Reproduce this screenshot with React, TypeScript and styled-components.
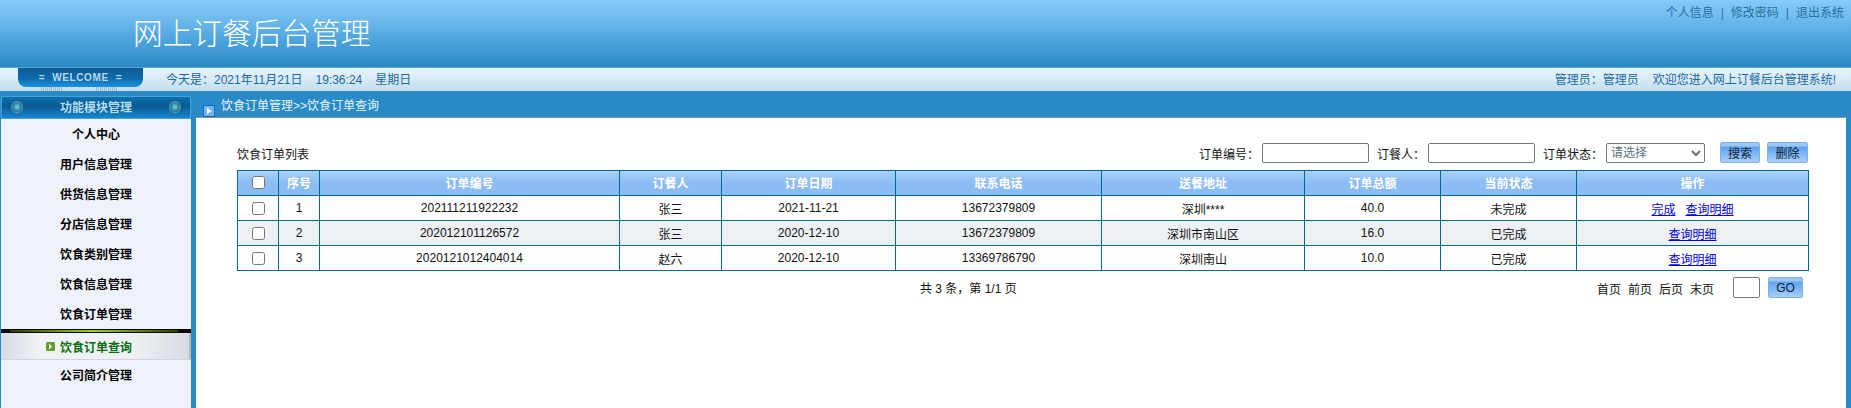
import styled, { createGlobalStyle } from "styled-components";

const FONT = `"Liberation Sans", "Noto Sans CJK SC", sans-serif`;

const GlobalStyle = createGlobalStyle`
  html, body {
    margin: 0;
    padding: 0;
    height: 100%;
    overflow: hidden;
    background-color: #288ac6;
  }
  #root {
    height: 100%;
  }
  * {
    box-sizing: border-box;
  }
`;

const Root = styled.div`
  height: 408px;
  display: flex;
  flex-direction: column;
  font-family: ${FONT};
  font-size: 12px;
  color: #111;
`;

const Banner = styled.header`
  height: 67px;
  flex: none;
  display: flex;
  justify-content: space-between;
  padding: 0 7px 0 133px;
  background: linear-gradient(#85cbfb 0%, #6db9ec 30%, #449dd7 70%, #288ac6 100%);
`;

const Title = styled.h1`
  margin: 16px 0 0;
  font-size: 29.7px;
  line-height: 36px;
  font-weight: 300;
  color: #fff;
`;

const TopLinks = styled.div`
  display: flex;
  gap: 7px;
  margin-top: 5px;
  height: 16px;
  line-height: 16px;
  color: #27709f;
`;

const StatusStrip = styled.div`
  height: 24px;
  flex: none;
  display: flex;
  align-items: flex-start;
  padding: 0 15px 0 18px;
  border-top: 1px solid #5f9fc9;
  background: linear-gradient(#e9f5fd, #c3def1);
  color: #1d6b9f;
  line-height: 24px;
`;

const WelcomeWrap = styled.div`
  width: 125px;
  flex: none;
  margin-right: 23px;
`;

const WelcomeBadge = styled.div`
  height: 19px;
  display: flex;
  justify-content: center;
  gap: 7px;
  border-radius: 0 0 8px 8px;
  background: linear-gradient(#0b5c96 0%, #0f6bab 55%, #1a94e4 100%);
  color: #b9d7ea;
  font-size: 10px;
  font-weight: bold;
  letter-spacing: 0.6px;
  line-height: 20px;
`;

const WelcomeTicks = styled.div`
  height: 4px;
  display: flex;
  justify-content: space-between;
  padding: 0 25px 0 23px;
`;

const Tick = styled.span`
  width: 22px;
  background: repeating-linear-gradient(90deg, #9fb8c9 0 1px, transparent 1px 2px);
`;

const Today = styled.div`
  display: flex;
  gap: 13px;
`;

const Welcome = styled.div`
  margin-left: auto;
  display: flex;
  gap: 14px;
`;

const Main = styled.div`
  flex: 1;
  min-height: 0;
  display: flex;
  padding: 0 5px 0 1px;
`;

const Sidebar = styled.aside`
  width: 190px;
  flex: none;
  margin: 5px 5px 0 0;
  display: flex;
  flex-direction: column;
  background-color: #edf2fb;
`;

const SideHead = styled.div`
  height: 23px;
  flex: none;
  display: flex;
  align-items: center;
  justify-content: space-between;
  padding: 0 9px 2px;
  border: 1px solid #4ba0d8;
  background: linear-gradient(#0c70b0 0%, #0a5a92 45%, #0f6fae 70%, #1787cf 100%);
  color: #b7dcf2;
  font-weight: bold;
`;

const Knob = styled.span`
  width: 12px;
  height: 12px;
  border-radius: 50%;
  border: 1px solid #6f97ad;
  background: radial-gradient(circle, #6fd4e6 0%, #2e86a5 55%, #123f5d 100%);
`;

const SideItem = styled.div`
  height: 30px;
  flex: none;
  display: flex;
  align-items: center;
  justify-content: center;
  padding-bottom: 2px;
  font-weight: bold;
  color: #000;
`;

const ActiveBar = styled.div`
  height: 4px;
  flex: none;
  padding: 1px 13px 1px 9px;
  background: #0a0a0a;
`;

const ActiveGlow = styled.div`
  height: 100%;
  background: linear-gradient(90deg, #2c3d00, #a8d800 50%, #2c3d00);
`;

const ActiveItem = styled.div`
  height: 27px;
  flex: none;
  display: flex;
  align-items: center;
  justify-content: center;
  gap: 5px;
  padding: 0 12px 0 0;
  border-bottom: 1px solid #cfd4e0;
  border-right: 2px solid #b5b9bf;
  background: linear-gradient(90deg, #d5d9e2, #f0f2f6 20%, #eef0f4 70%, #d8dbe2),
    #e6e8ee;
  font-weight: bold;
  color: #0a6d10;
`;

const Content = styled.main`
  flex: 1;
  min-width: 0;
  display: flex;
  flex-direction: column;
`;

const Crumb = styled.div`
  height: 27px;
  flex: none;
  display: flex;
  align-items: flex-start;
  gap: 6px;
  padding: 7px 0 0 7px;
  border-bottom: 1px solid #8a8f94;
  color: #e8f4fc;
  line-height: 16px;
`;

const CrumbIcon = styled.svg`
  width: 12px;
  height: 12px;
  margin-top: 7px;
  flex: none;
`;

const Panel = styled.section`
  flex: 1;
  background-color: #fff;
  padding: 24px 38px 0 41px;
`;

const Toolbar = styled.div`
  height: 28px;
  display: flex;
  align-items: flex-start;
`;

const ListTitle = styled.div`
  margin: 5px auto 0 0;
  line-height: 16px;
`;

const Field = styled.label`
  display: flex;
  align-items: flex-start;
  gap: 3px;
  margin-left: 8px;
  line-height: 16px;
  padding-top: 1px;
`;

const FieldText = styled.span`
  margin-top: 4px;
`;

const TextInput = styled.input<{ $width: number }>`
  width: ${(p) => p.$width}px;
  height: 20px;
  margin: 0;
  padding: 0 4px;
  border: 1px solid #767676;
  border-radius: 2px;
  background: #fff;
`;

const Select = styled.select`
  width: 99px;
  height: 20px;
  margin: 0;
  padding: 0;
  border: 1px solid #767676;
  border-radius: 2px;
  background-color: #fff;
  color: #5a7187;
  font-family: ${FONT};
  font-size: 12px;
`;

const BlueButton = styled.button<{ $width: number }>`
  width: ${(p) => p.$width}px;
  height: 21px;
  margin: 0;
  padding: 0;
  border: 1px solid #7fb0e6;
  border-radius: 2px;
  background: linear-gradient(#9cc7f7 0 3px, #5fa2ee 4px, #a9cff8 100%);
  color: #0c2238;
  font-family: ${FONT};
  font-size: 12px;
`;

const SearchButton = styled(BlueButton)`
  margin-left: 15px;
`;

const DeleteButton = styled(BlueButton)`
  margin-left: 7px;
`;

const Table = styled.table`
  width: 1571px;
  border-collapse: collapse;
  table-layout: fixed;
  text-align: center;
`;

const HeadRow = styled.tr`
  background: linear-gradient(#acd3f9 0%, #8bbcf3 45%, #8bbcf3 100%);
`;

const Th = styled.th`
  height: 25px;
  padding: 0 0 2px;
  border: 1px solid #006a8c;
  color: #fff;
  font-size: 12px;
  font-weight: bold;
`;

const Row = styled.tr<{ $alt: boolean }>`
  background-color: ${(p) => (p.$alt ? "#edf0f5" : "#fff")};
`;

const Td = styled.td`
  height: 25px;
  padding: 0;
  border: 1px solid #006a8c;
  color: #111;
`;

const Check = styled.input`
  display: block;
  width: 13px;
  height: 13px;
  margin: 0 auto;
`;

const OpLink = styled.a`
  color: #0000ee;
  text-decoration: underline;
  cursor: pointer;
`;

const OpGroup = styled.div`
  display: flex;
  justify-content: center;
  gap: 10px;
`;

const Pager = styled.div`
  display: flex;
  align-items: flex-start;
  padding: 6px 5px 0 683px;
`;

const Summary = styled.div`
  margin: 4px auto 0 0;
  line-height: 16px;
`;

const PageLinks = styled.div`
  display: flex;
  gap: 7px;
  margin: 5px 19px 0 0;
  line-height: 16px;
`;

const PageInput = styled(TextInput)`
  height: 21px;
`;

const GoButton = styled(BlueButton)`
  margin-left: 8px;
`;

const menu = ["个人中心", "用户信息管理", "供货信息管理", "分店信息管理", "饮食类别管理", "饮食信息管理", "饮食订单管理"];

const columns = [
  { width: 41, label: "" },
  { width: 41, label: "序号" },
  { width: 300, label: "订单编号" },
  { width: 102, label: "订餐人" },
  { width: 174, label: "订单日期" },
  { width: 206, label: "联系电话" },
  { width: 203, label: "送餐地址" },
  { width: 136, label: "订单总额" },
  { width: 136, label: "当前状态" },
  { width: 232, label: "操作" },
];

const orders = [
  { no: "202111211922232", name: "张三", date: "2021-11-21", phone: "13672379809", addr: "深圳****", total: "40.0", status: "未完成", open: true },
  { no: "202012101126572", name: "张三", date: "2020-12-10", phone: "13672379809", addr: "深圳市南山区", total: "16.0", status: "已完成", open: false },
  { no: "2020121012404014", name: "赵六", date: "2020-12-10", phone: "13369786790", addr: "深圳南山", total: "10.0", status: "已完成", open: false },
];

export default function App() {
  return (
    <Root>
      <GlobalStyle />
      <Banner>
        <Title>网上订餐后台管理</Title>
        <TopLinks>
          <span>个人信息</span>
          <span>|</span>
          <span>修改密码</span>
          <span>|</span>
          <span>退出系统</span>
        </TopLinks>
      </Banner>

      <StatusStrip>
        <WelcomeWrap>
          <WelcomeBadge>
            <span>=</span>
            <span>WELCOME</span>
            <span>=</span>
          </WelcomeBadge>
          <WelcomeTicks>
            <Tick />
            <Tick />
          </WelcomeTicks>
        </WelcomeWrap>
        <Today>
          <span>今天是：2021年11月21日</span>
          <span>19:36:24</span>
          <span>星期日</span>
        </Today>
        <Welcome>
          <span>管理员：管理员</span>
          <span>欢迎您进入网上订餐后台管理系统!</span>
        </Welcome>
      </StatusStrip>

      <Main>
        <Sidebar>
          <SideHead>
            <Knob />
            <span>功能模块管理</span>
            <Knob />
          </SideHead>
          {menu.map((item) => (
            <SideItem key={item}>{item}</SideItem>
          ))}
          <ActiveBar>
            <ActiveGlow />
          </ActiveBar>
          <ActiveItem>
            <svg width="9" height="9" viewBox="0 0 9 9">
              <rect width="9" height="9" rx="1.5" fill="#5f9e2c" />
              <path d="M3 1.5 6.2 4.5 3 7.5Z" fill="#fff" />
            </svg>
            饮食订单查询
          </ActiveItem>
          <SideItem>公司简介管理</SideItem>
        </Sidebar>

        <Content>
          <Crumb>
            <CrumbIcon viewBox="0 0 12 12">
              <rect width="12" height="12" fill="#1266c8" />
              <rect x="1" y="1" width="10" height="10" fill="#6fb4ee" />
              <path d="M4 2.5 8.5 6 4 9.5Z" fill="#fff" />
            </CrumbIcon>
            饮食订单管理&gt;&gt;饮食订单查询
          </Crumb>
          <Panel>
            <Toolbar>
              <ListTitle>饮食订单列表</ListTitle>
              <Field>
                <FieldText>订单编号：</FieldText>
                <TextInput $width={107} />
              </Field>
              <Field>
                <FieldText>订餐人：</FieldText>
                <TextInput $width={107} />
              </Field>
              <Field>
                <FieldText>订单状态：</FieldText>
                <Select defaultValue="">
                  <option value="">请选择</option>
                </Select>
              </Field>
              <SearchButton $width={40}>搜索</SearchButton>
              <DeleteButton $width={41}>删除</DeleteButton>
            </Toolbar>

            <Table>
              <colgroup>
                {columns.map((col, i) => (
                  <col key={i} width={col.width} />
                ))}
              </colgroup>
              <thead>
                <HeadRow>
                  <Th>
                    <Check type="checkbox" />
                  </Th>
                  {columns.slice(1).map((col) => (
                    <Th key={col.label}>{col.label}</Th>
                  ))}
                </HeadRow>
              </thead>
              <tbody>
                {orders.map((order, i) => (
                  <Row key={order.no} $alt={i === 1}>
                    <Td>
                      <Check type="checkbox" />
                    </Td>
                    <Td>{i + 1}</Td>
                    <Td>{order.no}</Td>
                    <Td>{order.name}</Td>
                    <Td>{order.date}</Td>
                    <Td>{order.phone}</Td>
                    <Td>{order.addr}</Td>
                    <Td>{order.total}</Td>
                    <Td>{order.status}</Td>
                    <Td>
                      <OpGroup>
                        {order.open && <OpLink>完成</OpLink>}
                        <OpLink>查询明细</OpLink>
                      </OpGroup>
                    </Td>
                  </Row>
                ))}
              </tbody>
            </Table>

            <Pager>
              <Summary>共 3 条，第 1/1 页</Summary>
              <PageLinks>
                <span>首页</span>
                <span>前页</span>
                <span>后页</span>
                <span>末页</span>
              </PageLinks>
              <PageInput $width={27} />
              <GoButton $width={35}>GO</GoButton>
            </Pager>
          </Panel>
        </Content>
      </Main>
    </Root>
  );
}
